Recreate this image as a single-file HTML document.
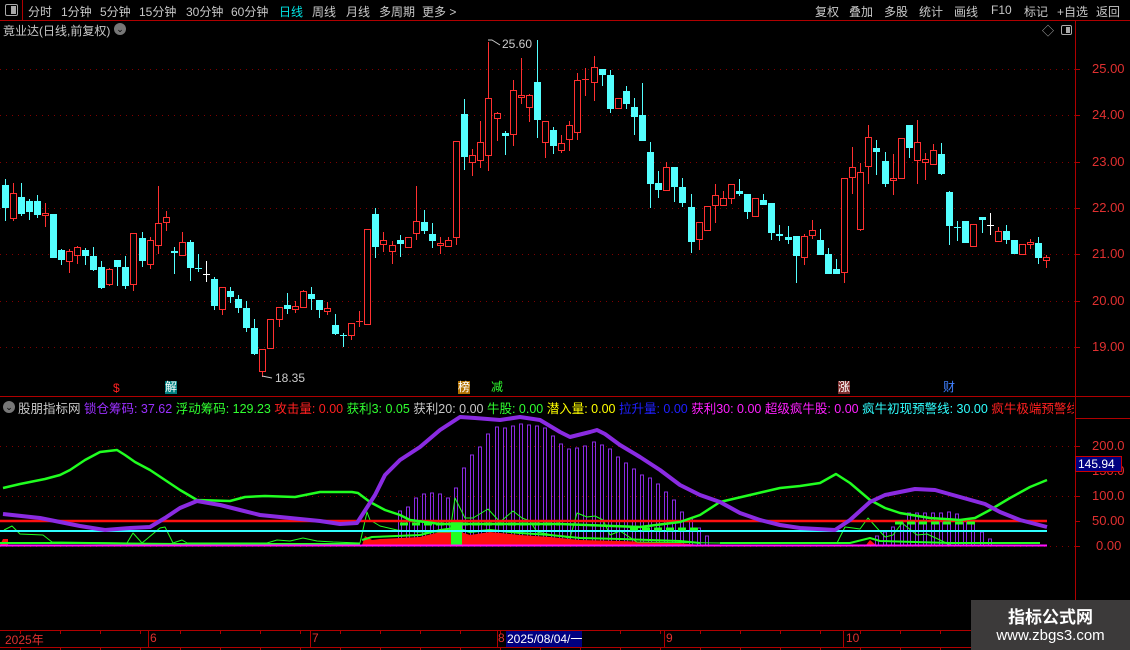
<!DOCTYPE html>
<html><head><meta charset="utf-8"><style>
*{margin:0;padding:0;box-sizing:border-box}
body{width:1130px;height:650px;background:#000;overflow:hidden;position:relative;font-family:"Liberation Sans","Noto Sans CJK SC",sans-serif;font-size:13px;color:#c8c8c8}
.a{position:absolute;white-space:nowrap}
.m{font-size:12px}
</style></head><body>
<svg id="s" class="a" style="left:0;top:0" width="1130" height="650" xmlns="http://www.w3.org/2000/svg"></svg>

<!-- top bar -->
<div class="a" style="left:0;top:0;width:1130px;height:21px;border-bottom:1px solid #b00000"></div>
<div class="a" style="left:0;top:0;width:23px;height:21px;border-right:1px solid #b00000"></div>
<div class="a" style="left:5px;top:4px;width:13px;height:12px;border:1px solid #aaa;border-radius:2px"><div style="position:absolute;right:1px;top:1px;width:5px;height:8px;background:#aaa"></div></div>
<div class="a m" style="top:3px;left:28px">分时</div>
<div class="a m" style="top:3px;left:61px">1分钟</div>
<div class="a m" style="top:3px;left:100px">5分钟</div>
<div class="a m" style="top:3px;left:139px">15分钟</div>
<div class="a m" style="top:3px;left:186px">30分钟</div>
<div class="a m" style="top:3px;left:231px">60分钟</div>
<div class="a m" style="top:3px;left:279px;color:#00e5e5">日线</div>
<div class="a m" style="top:3px;left:312px">周线</div>
<div class="a m" style="top:3px;left:346px">月线</div>
<div class="a m" style="top:3px;left:379px">多周期</div>
<div class="a m" style="top:3px;left:422px">更多 &gt;</div>
<div class="a m" style="top:3px;left:815px">复权</div>
<div class="a m" style="top:3px;left:849px">叠加</div>
<div class="a m" style="top:3px;left:884px">多股</div>
<div class="a m" style="top:3px;left:919px">统计</div>
<div class="a m" style="top:3px;left:954px">画线</div>
<div class="a m" style="top:3px;left:991px">F10</div>
<div class="a m" style="top:3px;left:1024px">标记</div>
<div class="a m" style="top:3px;left:1057px">+自选</div>
<div class="a m" style="top:3px;left:1096px">返回</div>

<div class="a m" style="top:22px;left:3px">竟业达(日线,前复权)</div>
<div class="a" style="top:23px;left:114px;width:12px;height:12px;border-radius:6px;background:#777;color:#000;font-size:9px;line-height:12px;text-align:center">⌄</div>
<div class="a" style="top:22px;left:1042px;color:#aaa;font-size:12px">◇</div>
<div class="a" style="top:25px;left:1061px;width:11px;height:10px;border:1px solid #aaa;border-radius:2px"><div style="position:absolute;right:1px;top:1px;width:4px;height:6px;background:#aaa"></div></div>

<!-- price labels -->
<div class="a" style="top:61px;left:1092px;color:#e03030">25.00</div>
<div class="a" style="top:107px;left:1092px;color:#e03030">24.00</div>
<div class="a" style="top:154px;left:1092px;color:#e03030">23.00</div>
<div class="a" style="top:200px;left:1092px;color:#e03030">22.00</div>
<div class="a" style="top:246px;left:1092px;color:#e03030">21.00</div>
<div class="a" style="top:293px;left:1092px;color:#e03030">20.00</div>
<div class="a" style="top:339px;left:1092px;color:#e03030">19.00</div>
<div class="a" style="top:37px;left:502px;color:#ccc;font-size:12px">25.60</div>
<div class="a" style="top:371px;left:275px;color:#ccc;font-size:12px">18.35</div>

<!-- markers -->
<div class="a" style="top:381px;left:113px;color:#ff2020;font-size:12px">$</div>
<div class="a" style="top:381px;left:165px;background:#008080;color:#fff;font-size:12px;line-height:13px">解</div>
<div class="a" style="top:381px;left:458px;background:#b07000;color:#fff;font-size:12px;line-height:13px">榜</div>
<div class="a" style="top:381px;left:491px;color:#30ff30;font-size:12px;line-height:13px">减</div>
<div class="a" style="top:381px;left:838px;background:#803030;color:#fff;font-size:12px;line-height:13px">涨</div>
<div class="a" style="top:381px;left:943px;color:#4080ff;font-size:12px;line-height:13px">财</div>

<!-- indicator labels -->
<div class="a" style="top:401px;left:3px;width:12px;height:12px;border-radius:6px;background:#777;color:#000;font-size:9px;line-height:12px;text-align:center">⌄</div>
<div class="a" style="top:398px;left:18px;width:1056px;overflow:hidden;font-size:12.5px">
<span style="color:#c8c8c8">股朋指标网 </span><span style="color:#9b30ff">锁仓筹码: 37.62 </span><span style="color:#30ff30">浮动筹码: 129.23 </span><span style="color:#ff2020">攻击量: 0.00 </span><span style="color:#30ff30">获利3: 0.05 </span><span style="color:#c8c8c8">获利20: 0.00 </span><span style="color:#30ff30">牛股: 0.00 </span><span style="color:#ffff00">潜入量: 0.00 </span><span style="color:#2020ff">拉升量: 0.00 </span><span style="color:#ff20ff">获利30: 0.00 </span><span style="color:#ff20ff">超级疯牛股: 0.00 </span><span style="color:#30ffff">疯牛初现预警线: 30.00 </span><span style="color:#ff2020">疯牛极端预警线: 50.00</span></div>
<div class="a" style="top:438px;left:1092px;color:#e03030">200.0</div>
<div class="a" style="top:463px;left:1092px;color:#e03030">150.0</div>
<div class="a" style="top:488px;left:1092px;color:#e03030">100.0</div>
<div class="a" style="top:513px;left:1092px;color:#e03030">50.00</div>
<div class="a" style="top:538px;left:1096px;color:#e03030">0.00</div>
<div class="a" style="top:456px;left:1075px;width:47px;height:16px;background:#000080;border:1px solid #c00;color:#fff;font-size:12px;line-height:14px;padding-left:2px">145.94</div>

<!-- date axis -->
<div class="a" style="top:631px;left:5px;color:#e03030;font-size:12px">2025年</div>
<div class="a" style="top:631px;left:150px;color:#e03030;font-size:12px">6</div>
<div class="a" style="top:631px;left:312px;color:#e03030;font-size:12px">7</div>
<div class="a" style="top:631px;left:498px;color:#e03030;font-size:12px">8</div>
<div class="a" style="top:631px;left:506px;background:#000080;color:#fff;font-size:12px;width:76px;height:16px;line-height:16px;padding-left:1px">2025/08/04/一</div>
<div class="a" style="top:631px;left:666px;color:#e03030;font-size:12px">9</div>
<div class="a" style="top:631px;left:846px;color:#e03030;font-size:12px">10</div>

<!-- watermark -->
<div class="a" style="left:971px;top:600px;width:159px;height:50px;background:#3c3a3a"></div>
<div class="a" style="left:971px;top:603px;width:159px;text-align:center;color:#fff;font-weight:bold;font-size:17px">指标公式网</div>
<div class="a" style="left:971px;top:627px;width:159px;text-align:center;color:#fff;font-size:15px">www.zbgs3.com</div>

<script>
var S=document.getElementById('s'),h='';
function L(x1,y1,x2,y2,c,w,ex){h+='<line x1="'+x1+'" y1="'+y1+'" x2="'+x2+'" y2="'+y2+'" stroke="'+c+'" stroke-width="'+(w||1)+'" '+(ex||'')+'/>';}
function P(pts,c,w,ex){h+='<polyline fill="none" points="'+pts.map(function(p){return p.join(',')}).join(' ')+'" stroke="'+c+'" stroke-width="'+w+'" stroke-linejoin="round" '+(ex||'')+'/>';}
L(1075.5,21,1075.5,650,'#b00000');
L(0,396.5,1130,396.5,'#b00000');
L(0,630.5,1130,630.5,'#b00000');
L(0,647.5,1130,647.5,'#b00000');
L(1075,418.5,1130,418.5,'#b00000');
[148,310,497,664,843].forEach(function(x){L(x+.5,630,x+.5,647,'#b00000');});
for(var x=20;x<1075;x+=40){L(x+.5,630,x+.5,634,'#b00000');L(x+.5,647,x+.5,650,'#b00000');}
[69,115,162,208,254,301,347].forEach(function(y){L(0,y+.5,1075,y+.5,'#800000',1,'stroke-dasharray="1,5"');L(1075,y+.5,1080,y+.5,'#b00000');});
[446,496,546].forEach(function(y){L(0,y+.5,1075,y+.5,'#800000',1,'stroke-dasharray="1,5"');});
[446,471,496,521,546].forEach(function(y){L(1075,y+.5,1080,y+.5,'#b00000');});
var A=[[185,208,179,221,'c'],[193,219,183,221,'r'],[197,214,183,216,'c'],[201,212,199,220,'c'],[201,215,195,218,'c'],[213,216,203,227,'r'],[214,258,214,258,'c'],[250,260,249,265,'c'],[251,262,249,273,'r'],[247,256,246,264,'r'],[250,256,248,265,'c'],[256,270,247,271,'c'],[267,288,261,289,'c'],[269,285,268,286,'r'],[260,267,260,286,'c'],[267,286,256,289,'c'],[233,285,233,291,'r'],[238,261,232,267,'c'],[240,265,237,269,'r'],[223,246,186,254,'r'],[217,223,211,231,'r'],[251,253,247,274,'c'],[242,256,232,256,'r'],[242,268,240,281,'c'],[268,268,254,272,'c'],[274,274,261,282,'w'],[279,306,277,310,'c'],[287,310,287,315,'r'],[291,297,287,303,'c'],[299,308,295,313,'c'],[308,328,301,332,'c'],[328,354,319,355,'c'],[349,372,349,377,'r'],[319,349,319,349,'r'],[307,320,307,327,'r'],[305,309,293,314,'c'],[306,310,301,313,'r'],[291,308,290,308,'r'],[294,299,287,310,'c'],[300,310,300,318,'c'],[308,312,302,315,'r'],[325,334,314,335,'c'],[335,335,333,347,'c'],[323,336,323,340,'r'],[321,321,311,327,'r'],[229,325,229,325,'r'],[214,247,208,258,'c']];
var C=[];A.forEach(function(a,i){C.push([Math.round(4.5+i*8.06)].concat(a));});
C=C.concat([[383,240,245,232,252,'r'],[392,245,252,241,264,'r'],[400,240,244,235,257,'c'],[408,237,248,237,248,'r'],[416,221,234,186,240,'r'],[424,222,231,210,234,'c'],[432,234,241,223,248,'c'],[440,243,246,237,254,'r'],[448,240,247,237,247,'r'],[456,141,238,141,245,'r'],[464,114,157,99,170,'c'],[472,155,163,149,176,'r'],[480,142,161,121,168,'r'],[488,98,156,42,171,'r'],[497,113,119,112,141,'r'],[505,133,136,131,155,'c'],[513,90,135,80,146,'r'],[521,95,98,58,104,'r'],[529,95,108,94,122,'r'],[537,82,120,40,138,'c'],[545,121,143,121,158,'r'],[553,130,146,127,154,'c'],[561,143,151,135,153,'r'],[569,125,140,121,151,'r'],[577,80,133,73,140,'r'],[585,79,80,68,96,'r'],[594,67,83,56,101,'r'],[602,69,75,69,86,'c'],[610,75,109,70,113,'c'],[618,98,109,98,109,'r'],[626,91,104,86,109,'c'],[634,107,117,98,135,'c'],[642,115,141,83,141,'c'],[650,152,184,142,208,'c'],[658,183,190,171,198,'c'],[666,167,191,162,191,'r'],[674,167,187,167,202,'c'],[682,187,203,178,207,'c'],[691,207,242,194,253,'c'],[699,222,240,222,250,'r'],[707,206,231,206,231,'r'],[715,195,206,184,223,'r'],[723,198,206,191,206,'r'],[731,184,199,184,204,'r'],[739,191,194,179,196,'c'],[747,194,212,194,219,'c'],[755,198,217,198,217,'r'],[763,200,205,194,205,'c'],[771,203,233,203,240,'c'],[779,234,236,225,241,'c'],[788,237,240,226,244,'c'],[796,236,256,236,283,'c'],[804,236,258,234,265,'r'],[812,230,236,220,239,'r'],[820,240,255,229,255,'c'],[828,254,274,248,274,'c'],[836,269,274,259,274,'c'],[844,178,273,178,283,'r'],[852,167,178,147,194,'r'],[860,172,230,163,231,'r'],[868,137,167,125,184,'r'],[876,148,152,140,175,'c'],[885,161,184,152,187,'c'],[893,178,181,154,195,'r'],[901,138,179,138,179,'r'],[909,125,148,125,158,'c'],[917,142,161,120,184,'r'],[925,159,163,153,180,'r'],[933,150,165,144,165,'r'],[941,154,174,143,175,'c'],[949,192,226,191,245,'c'],[957,227,227,221,241,'c'],[965,221,243,221,243,'c'],[973,224,247,224,247,'r'],[982,217,220,217,233,'c'],[990,225,225,213,235,'w'],[998,231,242,227,242,'r'],[1006,231,240,225,244,'c'],[1014,240,254,240,254,'c'],[1022,244,255,244,255,'r'],[1030,242,245,239,249,'r'],[1038,243,258,237,264,'c'],[1046,257,261,255,268,'r']]);
C.forEach(function(c){var x=c[0],t=c[1],b=c[2],hi=c[3],lo=c[4],k=c[5];
 var col=k=='r'?'#ff3030':k=='c'?'#54ffff':'#ffffff';
 L(x+.5,hi,x+.5,lo,col);
 if(b-t<2){L(x-3,t+.5,x+4,t+.5,col);}
 else if(k=='r'){h+='<rect x="'+(x-2.5)+'" y="'+(t+.5)+'" width="6" height="'+(b-t-1)+'" fill="#000" stroke="'+col+'"/>';}
 else{h+='<rect x="'+(x-3)+'" y="'+t+'" width="7" height="'+(b-t)+'" fill="'+col+'"/>';}
});
P([[488,40],[492,40],[500,45]],'#ccc',1);P([[262,376],[272,378]],'#ccc',1);
var B=[[400,511],[408,507],[416,498],[424,494],[432,493],[440,494],[448,498],[456,488],[464,468],[472,455],[480,447],[488,434],[497,427],[505,428],[513,426],[521,424],[529,425],[537,426],[545,428],[553,436],[561,444],[569,449],[577,448],[585,446],[594,442],[602,445],[610,449],[618,457],[626,463],[634,469],[642,475],[650,478],[658,484],[666,492],[674,500],[682,512],[691,519],[699,528],[707,536],[877,536],[885,532],[893,527],[902,523],[909,513],[917,513],[925,513],[933,513],[941,513],[949,512],[957,514],[965,520],[973,524],[982,532],[990,539]];
B.forEach(function(b){h+='<rect x="'+(b[0]-1.5)+'" y="'+b[1]+'" width="3" height="'+(545-b[1])+'" fill="none" stroke="#8a2be2" stroke-width="1"/>';});
h+='<polygon points="362,545 365,536 372,540 380,539 420,537 440,532 455,530 470,535 490,532 520,535 550,537 580,540 620,541 680,543 700,545" fill="#ff1010"/>';
h+='<polygon points="0,545 3,539 8,539 8,545" fill="#ff1010"/>';
h+='<polygon points="866,545 870,540 876,545" fill="#ff1010"/>';
h+='<rect x="451" y="522" width="11" height="23" fill="#20ff20"/>';
P([[362,540],[372,537],[420,535],[440,530],[455,528],[470,532],[490,530],[520,533],[550,535],[580,538],[620,539],[680,541],[700,543]],'#20ff20',2);
P([[0,543],[80,543],[180,544],[300,544],[360,544]],'#20ff20',2);
P([[720,543],[850,543],[870,538],[880,541],[950,543],[1040,543]],'#20ff20',2);
P([[4,530],[12,526],[20,534],[43,535],[52,542],[127,543],[133,533],[142,543],[160,528],[165,527],[173,543],[182,540],[187,543],[267,543],[277,540],[290,541],[303,538],[317,541],[333,542],[360,543],[367,512],[370,520],[380,526],[397,530],[417,532],[450,532],[455,498],[465,518],[473,518],[488,509],[500,522],[513,511],[522,518],[530,521],[537,532],[553,535],[570,538],[577,513],[587,517],[595,516],[603,520],[610,535],[620,531],[637,542],[720,543],[837,543],[845,527],[853,528],[860,529],[868,518],[885,537],[893,535],[902,523],[917,535],[927,534],[940,540],[950,545]],'#20ff20',1);
L(0,545.5,1047,545.5,'#ff10ff',2);
L(0,531,1047,531,'#30ffff',2);
L(0,521,1047,521,'#ff1010',2.5);
P([[400,524],[560,524]],'#20ff20',3,'stroke-dasharray="8,4"');
P([[630,529],[700,529]],'#20ff20',3,'stroke-dasharray="8,4"');
P([[895,523],[975,523]],'#20ff20',3,'stroke-dasharray="8,4"');
P([[3,488],[20,484],[45,479],[60,475],[70,470],[85,460],[100,452],[117,450],[125,455],[135,462],[150,470],[165,480],[180,490],[197,500],[230,501],[245,497],[265,496],[295,497],[320,492],[352,492],[358,493],[370,502],[385,510],[400,515],[410,520],[440,524],[560,524],[640,527],[680,522],[700,515],[720,502],[750,495],[780,488],[800,486],[820,483],[836,474],[850,483],[870,500],[885,508],[900,513],[930,518],[960,520],[975,518],[990,510],[1010,498],[1030,487],[1047,480]],'#20ff20',2.5);
P([[3,514],[40,518],[80,526],[105,530],[130,528],[150,527],[165,518],[180,508],[197,501],[220,505],[240,510],[260,515],[280,517],[300,519],[320,521],[340,524],[357,523],[375,495],[385,475],[400,460],[420,447],[440,430],[460,417],[475,418],[500,420],[520,417],[540,420],[560,432],[570,437],[590,432],[597,430],[605,434],[620,445],[640,457],[660,470],[680,485],[700,495],[720,502],[740,513],[760,520],[780,525],[800,528],[835,530],[850,520],[870,502],[885,495],[900,492],[915,489],[935,490],[960,497],[985,504],[1000,512],[1020,520],[1047,527]],'#8a2be2',4);
S.innerHTML=h;
</script>
</body></html>
